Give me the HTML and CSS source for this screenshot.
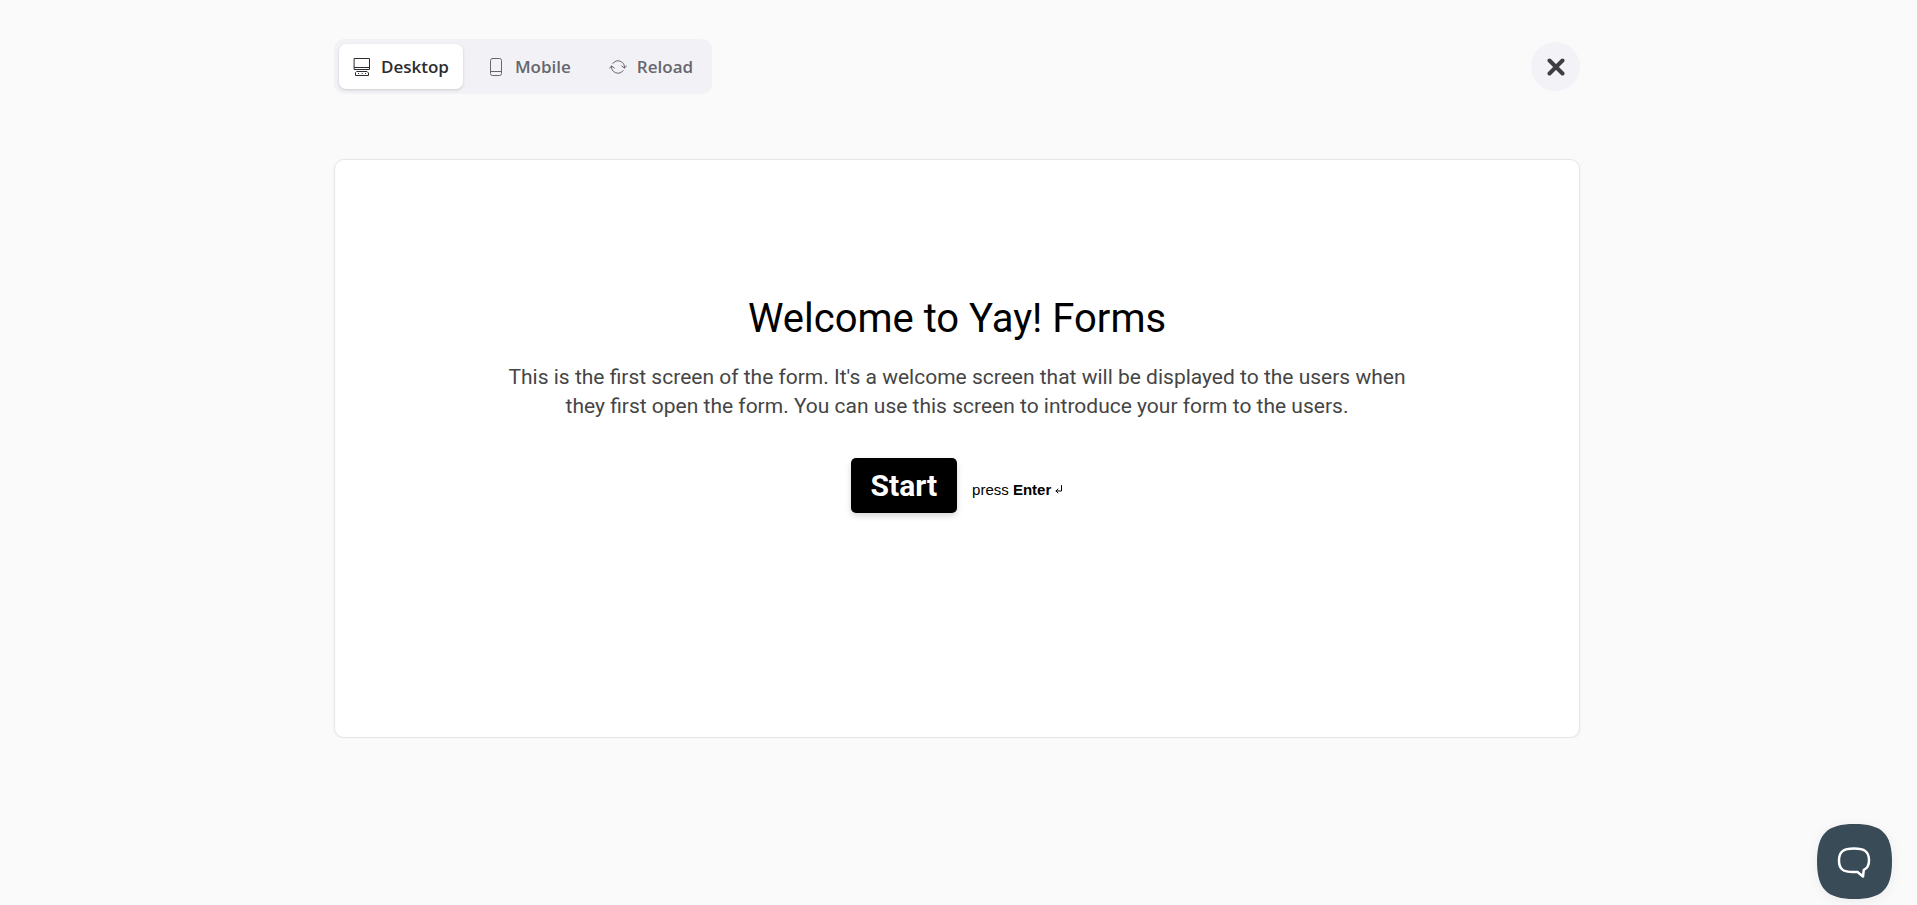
FILE: index.html
```html
<!DOCTYPE html>
<html lang="en">
<head>
<meta charset="utf-8">
<meta name="viewport" content="width=device-width, initial-scale=1">
<title>Form preview</title>
<link rel="stylesheet" href="styles.css">
</head>
<body>
<div class="preview">
  <header class="toolbar">
    <nav class="tabs" aria-label="Preview mode">
      <button type="button" class="tab tab-active">
        <svg class="tab-icon" viewBox="0 0 18 20" aria-hidden="true"><path d="M1.500 1.500h15v11h-15zM1.500 10.500h15M4 14.500h10l1.500 1.500v2.500h-13V16zM5.500 16.500h.2M9 16.500h.2M12.500 16.500h.2"/></svg>
        Desktop
      </button>
      <button type="button" class="tab">
        <svg class="tab-icon" viewBox="0 0 18 20" aria-hidden="true"><rect x="3.500" y="1.500" width="11" height="17" rx="2"/><path d="M3.500 14.500h11"/></svg>
        Mobile
      </button>
      <button type="button" class="tab">
        <svg class="tab-icon" viewBox="0 0 18 20" aria-hidden="true"><path d="M3.800 6.500A6.500 6.500 0 0 1 15.500 11M14.200 13.500A6.500 6.500 0 0 1 2.500 9M.5 11.200l2-2.200 2.800 2M12.700 9l2.800 2 2-2.200"/></svg>
        Reload
      </button>
    </nav>
    <button type="button" class="close" aria-label="Close">
      <svg class="close-icon" viewBox="0 0 18 18" aria-hidden="true"><path d="M2.500 2.500l13 13M15.500 2.500l-13 13"/></svg>
    </button>
  </header>
  <main class="card">
    <h1 class="title">Welcome to Yay! Forms</h1>
    <p class="description">This is the first screen of the form. It's a welcome screen that will be displayed to the users when they first open the form. You can use this screen to introduce your form to the users.</p>
    <div class="actions">
      <button type="button" class="start">Start</button>
      <span class="hint">press <strong>Enter</strong>
        <svg class="hint-icon" viewBox="0 0 8 10" aria-hidden="true"><path d="M6.500.5V6H1M3 4L1 6l2 2"/></svg>
      </span>
    </div>
  </main>
</div>
<button type="button" class="chat" aria-label="Open chat">
  <svg class="chat-shape" viewBox="0 0 75 75" aria-hidden="true">
    <path class="chat-bg" d="M37.500 0C65 0 75 10 75 37.500S65 75 37.500 75 0 65 0 37.500 10 0 37.500 0z"/>
    <path class="chat-bubble" d="M37 24.500c-10.500 0-15 3-15 12s4.500 11.500 14 11.500h4.500l5.500 4.500.8-6.700c3.700-1.500 5.200-4.500 5.200-9.300 0-9-4.500-12-15-12z"/>
  </svg>
</button>
</body>
</html>
```

FILE: styles.css
```css
* {
  box-sizing: border-box;
}

body {
  margin: 0;
  padding-right: 3px;
  background: #fafafa;
  font-family: "Open Sans", "Noto Sans", sans-serif;
}

button {
  border: 0;
  padding: 0;
  font: inherit;
  cursor: pointer;
}

svg {
  fill: none;
  stroke: currentColor;
  stroke-linecap: round;
  stroke-linejoin: round;
}

.preview {
  width: 65.1%;
  margin: 0 auto;
  padding-top: 39px;
}

.toolbar {
  display: flex;
  align-items: center;
  justify-content: space-between;
}

.tabs {
  display: flex;
  gap: 10px;
  padding: 5px;
  border-radius: 10px;
  background: #f2f2f6;
}

.tab {
  display: flex;
  align-items: center;
  gap: 10px;
  height: 45px;
  padding: 0 14px;
  border-radius: 7px;
  background: transparent;
  color: #66666d;
  font-size: 17px;
  font-weight: 600;
}

.tab-active {
  background: #fff;
  color: #2c2c30;
  box-shadow: 0 1px 3px rgba(0, 0, 0, 0.16);
}

.tab-icon {
  width: 18px;
  height: 20px;
}

.close {
  display: grid;
  place-items: center;
  width: 49px;
  height: 49px;
  border-radius: 50%;
  background: #f3f3f7;
  color: #3f3f43;
}

.close-icon {
  width: 18px;
  height: 18px;
  stroke-width: 4;
}

.card {
  display: flex;
  flex-direction: column;
  align-items: center;
  margin-top: 65px;
  padding: 133px 24px 224px;
  border: 1px solid #e7e7e9;
  border-radius: 10px;
  background: #fff;
  box-shadow: 0 1px 3px rgba(0, 0, 0, 0.06);
  color: #000;
  font-family: Roboto, sans-serif;
  text-align: center;
}

.title {
  margin: 0;
  font-size: 40px;
  font-weight: 400;
  line-height: 52px;
}

.description {
  max-width: 900px;
  margin: 18px 0 0;
  color: #454545;
  font-size: 21px;
  line-height: 29px;
}

.actions {
  display: flex;
  align-items: center;
  gap: 15px;
  margin-top: 37px;
}

.start {
  height: 55px;
  padding: 0 20px;
  border-radius: 5px;
  background: #000;
  color: #fff;
  font-size: 30px;
  font-weight: 700;
  box-shadow: 0 3px 6px rgba(0, 0, 0, 0.16);
}

.hint {
  padding-top: 8px;
  font-family: "Liberation Sans", Arial, sans-serif;
  font-size: 15px;
}

.hint-icon {
  width: 8px;
  height: 10px;
}

.chat {
  position: fixed;
  right: 25px;
  bottom: 6px;
  width: 75px;
  height: 75px;
  border-radius: 28px;
  background: transparent;
  box-shadow: 0 2px 12px rgba(0, 0, 0, 0.06);
}

.chat-shape {
  display: block;
  width: 75px;
  height: 75px;
}

.chat-bg {
  fill: #394b57;
  stroke: none;
}

.chat-bubble {
  stroke: #fff;
  stroke-width: 2.500;
}
```
